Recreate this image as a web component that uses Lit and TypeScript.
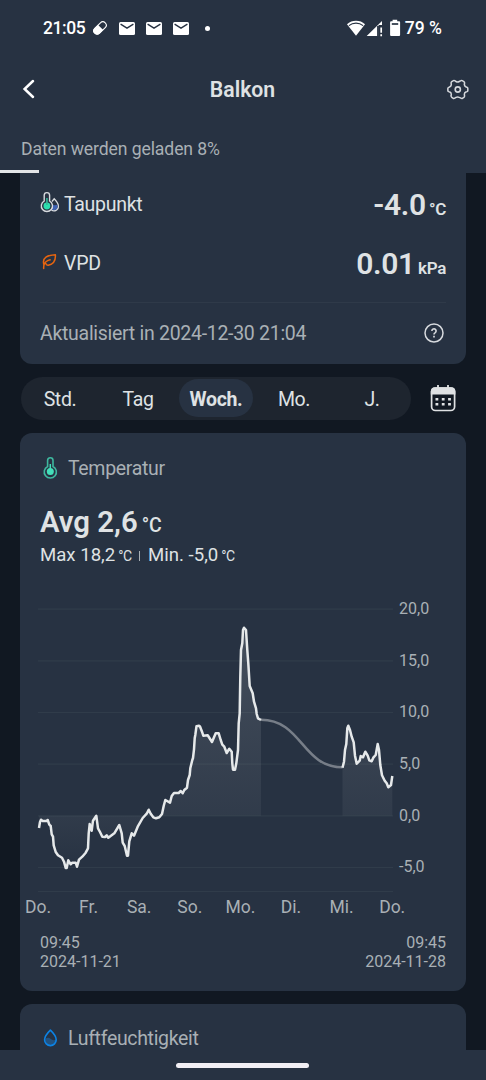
import { LitElement, html, svg, css } from "lit";
import { customElement, state } from "lit/decorators.js";
import { classMap } from "lit/directives/class-map.js";

const MORNING_RUN =
  "39,828 40,822 41,819.7 42.7,821 46.7,821 47.7,820 49.3,824.7 50.7,826 51.7,834.3 53,836.7 53.7,845.3 55.7,852 58,855.3 62,857.7 64,861.7 65.7,868 66.7,868 68.3,860.3 70.7,864.3 72.3,862.7 75.7,862.7 77,866.7 79,859.7 82.3,856.7 85.7,852.7 88,848.3 88.7,833.3 89.7,824 91.7,830.7 93,820.7 96.3,815.7 98,828.3 100,832 102.3,836.7 105,837 106.7,835.3 108.3,837.7 114.3,833.3 119.3,825 121.7,833.3 122.7,842.7 124.7,846 127,855.7 128,855.7 129.3,841.3 131.7,833.3 134,835.7 137.7,826.7 142.7,818 146.7,813.7 148.7,809.7 150.7,813.7 153.3,817.3 156,818.3 159.3,817.3 162,814 163.7,806 165.3,800 170,802.7 171.7,796 174,793 178.7,793 180.7,791 182.7,793.3 184.3,790 187,787.7 188,780 189.7,775 190.3,768.3 192.3,760 193,758 194,749.3 194.7,738.3 195.3,735 196.5,726.2 199,725.7 200,726.5 202,731.7 203.3,735.7 207.7,735.3 212,742 215.7,733.3 218.7,733.3 220.7,740 222.3,744.7 224.3,746.7 226.7,753 229.3,748.7 231.7,751.7 232.3,763.3 233,769.7 235,769.7 236.3,763.3 238,750 238.7,723.3 239.7,713.3 240.3,676.7 241,650 242.3,643.3 243,630 244,627.7 246,630 247.3,650 248.3,663.3 249.7,686 252.7,693.3 254,701.7 256,708.3 256.7,714 258,718.3 261,720";
const LATE_RUN =
  "342.5,767.7 344,761.7 345,750 346.3,744 347.3,728.3 348.3,725.7 350,730 351.7,736.7 353.7,742.3 355,755.7 356.7,763.7 359.7,760.7 360.7,756 363,757.3 365.3,751.7 367.7,755.7 369.3,760.3 371.7,761.3 373.3,757.7 375.7,755 377.7,744 379,750 380.3,765 382,775.3 384.7,780.7 386.7,783.3 388.3,787.3 391,785 392.3,776";
const ZERO_Y = 815.8;

const LEVELS: [string, number][] = [
  ["20,0", 609.2],
  ["15,0", 660.8],
  ["10,0", 712.5],
  ["5,0", 764.2],
  ["0,0", 815.8],
  ["-5,0", 867.5],
];
const DAYS = ["Do.", "Fr.", "Sa.", "So.", "Mo.", "Di.", "Mi.", "Do."];

const mailIcon = html`<svg class="mail" width="16" height="13" viewBox="0 0 16 13">
  <rect width="16" height="13" rx="1.5" fill="#fff" />
  <path d="M1.6 2.2 8 6.2 14.4 2.2" fill="none" stroke="#273242" stroke-width="1.4" />
</svg>`;

@customElement("app-root")
export class AppRoot extends LitElement {
  @state() private range = "Woch.";

  static styles = css`
    :host {
      display: flex;
      flex-direction: column;
      height: 1080px;
      overflow: hidden;
      background: #111822;
      color: #dfe2e4;
      font-family: Roboto, sans-serif;
      font-size: 20px;
    }
    * { box-sizing: border-box; }
    svg { display: block; flex: none; }
    header { flex: none; height: 173px; background: #273242; display: flex; flex-direction: column; }
    .status { height: 56px; padding: 0 44px 0 43px; display: flex; align-items: center; color: #fff; }
    .clock { width: 50px; font: 500 17.5px/56px Roboto, sans-serif; letter-spacing: -0.4px; }
    .mail { margin-right: 11px; }
    .dot { width: 5px; height: 5px; border-radius: 50%; background: #fff; margin-left: 5px; }
    .spacer { flex: 1; }
    .percent { font: 500 17.5px/56px Roboto, sans-serif; white-space: nowrap; }
    .nav { height: 66px; padding: 0 16px 0 20px; display: grid; grid-template-columns: 24px 1fr 24px; align-items: center; }
    .title { text-align: center; font-weight: 600; font-size: 21.2px; padding: 1px 5px 0 0; }
    .loading { height: 48px; padding: 0 21px; font-size: 17.6px; letter-spacing: -0.1px; line-height: 55px; color: #a9b0b5; white-space: nowrap; }
    .progress { width: 39px; height: 3px; background: #e3e5e7; }
    main { flex: 1; min-height: 0; overflow: hidden; padding: 0 20px; display: flex; flex-direction: column; }
    .card { flex: none; background: #273242; border-radius: 12px; }
    .summary { height: 190.5px; border-radius: 0 0 12px 12px; padding: 0 20px; }
    .row { display: flex; align-items: center; height: 56px; }
    .row.first { height: 62px; }
    .row svg { margin-bottom: 4px; }
    .name { flex: 1; padding-left: 4px; font-size: 19.5px; letter-spacing: -0.28px; }
    .value { font-weight: 600; font-size: 30px; letter-spacing: -0.3px; line-height: 36px; padding-top: 6px; }
    .value small { font-size: 17px; font-weight: 600; margin-left: 3px; letter-spacing: -0.3px; }
    .updated { display: flex; align-items: center; justify-content: space-between; height: 62px; margin-top: 11px; border-top: 1px solid #2f3a49; color: #a9b0b5; font-size: 19.5px; letter-spacing: -0.29px; }
    .updated svg { margin: 0 2px 2px 0; }
    .tools { display: flex; align-items: center; margin: 13.5px 0 13px; padding-left: 1px; height: 43px; flex: none; }
    .ranges { width: 390px; height: 43px; border-radius: 21.5px; background: #1e252f; padding: 2px 0; display: flex; }
    .range { flex: 1; text-align: center; line-height: 41px; height: 38px; font-size: 19.5px; letter-spacing: -0.35px; }
    .range span { display: block; width: 74px; margin: 0 auto; border-radius: 19px; }
    .selected span { background: #273242; font-weight: 700; height: 38px; }
    .calendar { margin: 0 0 2px 19px; }
    .chart-card { height: 557.5px; margin-bottom: 13px; }
    .heading { display: flex; align-items: center; height: 70px; padding: 0 20px; gap: 7px; color: #a9b0b5; font-size: 19.5px; letter-spacing: -0.33px; }
    .average { padding: 1px 0 0 20px; font-weight: 600; font-size: 29.3px; line-height: 37px; }
    .average small { font-size: 19.5px; font-weight: 500; margin-left: 4px; }
    .extremes { padding-left: 20px; margin-top: -3px; display: flex; align-items: baseline; font-size: 18.6px; line-height: 28px; }
    .extremes small { font-size: 14px; letter-spacing: -0.5px; margin-left: 3px; }
    .bar { width: 1px; height: 10px; background: #a9b0b5; align-self: center; margin: 0 8px 0 7.5px; }
    .chart { margin-top: 19.7px; overflow: visible; }
    .axis { font: 16px Roboto, sans-serif; fill: #a9b0b5; }
    .day { font: 17.5px Roboto, sans-serif; fill: #a9b0b5; text-anchor: middle; }
    .period { display: flex; justify-content: space-between; padding: 17.6px 20px 0; color: #a9b0b5; font-size: 16px; line-height: 18.7px; }
    .end { text-align: right; }
    .humidity { height: 90px; }
    footer { flex: none; height: 30px; background: #273242; display: flex; justify-content: center; align-items: center; padding-right: 1px; }
    .handle { width: 133px; height: 5px; border-radius: 3px; background: #f1eff4; }
  `;

  private thermometer() {
    return html`<svg width="21" height="24" viewBox="0 0 21 24" fill="none">
      <path d="M7.6 10.5V4.5a2.7 2.7 0 0 1 5.4 0v6a6.1 6.1 0 1 1-5.4 0Z" stroke="#3eb89f" stroke-width="1.6" />
      <circle cx="10.3" cy="15.4" r="3.5" fill="#43dfb9" />
      <path d="M10.3 8v6" stroke="#43dfb9" stroke-width="1.5" />
    </svg>`;
  }

  private chart() {
    return html`<svg class="chart" width="446" height="327" viewBox="20 590 446 327">
      <defs>
        <linearGradient id="fade" gradientUnits="userSpaceOnUse" x1="0" y1="627" x2="0" y2="868">
          <stop offset="0" stop-color="#e8ecee" stop-opacity="0.15" />
          <stop offset="0.78" stop-color="#e8ecee" stop-opacity="0.05" />
          <stop offset="1" stop-color="#e8ecee" stop-opacity="0" />
        </linearGradient>
      </defs>
      ${LEVELS.map(
        ([label, y]) => svg`<path d="M38 ${y}H393" stroke="#303c4a" stroke-width="1.2"/>
          <text class="axis" x="399" y=${y + 4.8}>${label}</text>`
      )}
      <path d="M38 891.5H393" stroke="#303c4a" stroke-width="1.2" />
      <path d="M39,${ZERO_Y}L${MORNING_RUN}L261,${ZERO_Y}Z" fill="url(#fade)" />
      <path d="M342.5,${ZERO_Y}L${LATE_RUN}V${ZERO_Y}Z" fill="url(#fade)" />
      <path d="M261 719.7C302 719.7 302 767.3 342.5 767.3" fill="none" stroke="#777e88" stroke-width="2.5" />
      <g fill="none" stroke="#e6e9ea" stroke-width="2.5" stroke-linejoin="round">
        <polyline points=${MORNING_RUN} />
        <polyline points=${LATE_RUN} />
      </g>
      ${DAYS.map((day, i) => svg`<text class="day" x=${38 + i * 50.6} y="912.5">${day}</text>`)}
    </svg>`;
  }

  render() {
    return html`
      <header>
        <div class="status">
          <span class="clock">21:05</span>
          <svg width="26" height="16" viewBox="0 0 26 16">
            <g transform="rotate(-45 7 8)">
              <rect x="-.4" y="4.6" width="14.8" height="6.8" rx="3.4" fill="none" stroke="#fff" stroke-width="1.1" />
              <path d="M7.8 4.2H3a3.8 3.8 0 0 0 0 7.6h4.8z" fill="#fff" />
            </g>
          </svg>
          ${mailIcon}${mailIcon}${mailIcon}
          <span class="dot"></span>
          <span class="spacer"></span>
          <svg width="58" height="18" viewBox="0 0 58 18">
            <path d="M0 5.2a13.6 13.6 0 0 1 18 0L9 16.8Z" fill="#fff" />
            <path d="M1.9 6.6a11.2 11.2 0 0 1 14.2 0" fill="none" stroke="#273242" stroke-width="1.2" />
            <path d="M19.7 17 35 2v4h-3.4v11Z" fill="#fff" />
            <path d="M31 17V7" stroke="#273242" stroke-width="1.8" />
            <path d="M34.2 8.5v5.3m0 1.5v1.9" stroke="#fff" stroke-width="1.7" />
            <path d="M45.6 2.2V.7h4.6v1.5h1.9q1 0 1 1V16q0 1-1 1h-8q-1 0-1-1V3.2q0-1 1-1Z" fill="#fff" />
            <path d="M44.8 5h6.4" stroke="#273242" stroke-width="1.7" />
          </svg>
          <span class="percent">79 %</span>
        </div>
        <div class="nav">
          <svg width="18" height="22" viewBox="0 0 18 22"><path d="M13 3 4.6 11 13 19" fill="none" stroke="#fff" stroke-width="2.5" stroke-linecap="round" /></svg>
          <span class="title">Balkon</span>
          <svg width="24" height="24" viewBox="0 0 24 24" fill="none" stroke="#d5d8dc" stroke-width="1.6" stroke-linejoin="round">
            <path transform="translate(.6 1) scale(.96)" d="M6.6 2.9Q7.5 2.2 8.5 2.8L9.8 3.7Q11.5 4.6 13.2 3.7L14.9 2.8Q15.8 2.2 16.8 2.9L18 3.7Q18.9 4.3 18.7 5.3L18.5 6.9Q18.6 8.7 20.3 9.3L21.5 9.8Q22.1 10.2 22.1 11V12.9Q22.1 13.8 21.2 14.2L20.1 14.6Q18.6 15.2 18.5 17L18.7 18.6Q18.8 19.5 18 20.1L16.8 20.9Q15.8 21.6 14.9 21L13.2 20.2Q11.5 19.3 9.8 20.2L8.5 21Q7.5 21.6 6.6 20.9L5.4 20.1Q4.5 19.5 4.7 18.5L4.9 17Q4.8 15.2 3.3 14.6L2.2 14.2Q1.3 13.8 1.3 12.9V11Q1.3 10.2 2.2 9.8L3.1 9.3Q4.8 8.7 4.9 6.9L4.7 5.3Q4.5 4.3 5.4 3.7Z" />
            <circle cx="11.8" cy="12.5" r="2.6" />
          </svg>
        </div>
        <div class="loading">Daten werden geladen 8%</div>
        <div class="progress"></div>
      </header>

      <main>
        <section class="card summary">
          <div class="row first">
            <svg width="20" height="24" viewBox="0 0 20 24" fill="none">
              <path d="M12 11.5 14.2 8.8q4.2 4.2 4.2 7.5a4.3 4.3 0 0 1-7 3.5" stroke="#d7dade" stroke-width="1.3" />
              <path d="M12.3 14.2Q14 16 17.4 14.8 18.5 20 13.8 20.3L11 19Z" fill="#4063b3" />
              <path d="M4.2 11V5.3a2.7 2.7 0 0 1 5.4 0V11a5.6 5.6 0 1 1-5.4 0Z" fill="#273242" stroke="#d7dade" stroke-width="1.4" />
              <circle cx="6.9" cy="16" r="3.4" fill="#2cdfae" />
              <path d="M6.9 8v7" stroke="#35b697" stroke-width="1.6" />
            </svg>
            <span class="name">Taupunkt</span>
            <span class="value">-4.0<small>°C</small></span>
          </div>
          <div class="row">
            <svg width="20" height="20" viewBox="0 0 20 20" fill="none" stroke="#e8650f" stroke-width="1.5" stroke-linecap="round" stroke-linejoin="round">
              <path d="M3.7 17.5Q3.2 11.5 8.2 9.4L10.1 8.8M3.8 13.3C2 6.3 7.5 4.2 15.4 3.7C15.8 9.5 13.4 13.2 8.3 14.2Q6.1 14.4 5.8 12.4" />
            </svg>
            <span class="name">VPD</span>
            <span class="value">0.01<small>kPa</small></span>
          </div>
          <div class="updated">
            <span>Aktualisiert in 2024-12-30 21:04</span>
            <svg width="20" height="20" viewBox="0 0 20 20" fill="none" stroke="#d7dade">
              <circle cx="10" cy="10" r="9" stroke-width="1.5" />
              <path d="M7.9 8a2.1 2.1 0 1 1 3.4 1.6Q10 10.3 10 11.4" stroke-width="1.6" />
              <path d="M10 12.8v1.7" stroke-width="1.7" />
            </svg>
          </div>
        </section>

        <div class="tools">
          <div class="ranges">
            ${["Std.", "Tag", "Woch.", "Mo.", "J."].map(
              (name) => html`<div
                class=${classMap({ range: true, selected: name === this.range })}
                @click=${() => (this.range = name)}
              ><span>${name}</span></div>`
            )}
          </div>
          <svg class="calendar" width="26" height="28" viewBox="0 0 26 28">
            <rect x="1.6" y="4" width="23" height="22.5" rx="3.8" fill="none" stroke="#dfe1e3" stroke-width="1.7" />
            <path d="M.8 10.5V7.5q0-4.3 4.3-4.3h16q4.3 0 4.3 4.3v3Z" fill="#dfe1e3" />
            <path d="M8 1v3M18 1v3" stroke="#dfe1e3" stroke-width="1.8" />
            <path d="M5.5 15.3h2.8m3.5 0h2.8m3.5 0h2.8M5.5 20.2h2.8m3.5 0h2.8m3.5 0h2.8" stroke="#dfe1e3" stroke-width="2.6" />
          </svg>
        </div>

        <section class="card chart-card">
          <div class="heading">${this.thermometer()}<span>Temperatur</span></div>
          <div class="average">Avg 2,6<small>°C</small></div>
          <div class="extremes">
            Max 18,2<small>°C</small><span class="bar"></span>Min. -5,0<small>°C</small>
          </div>
          ${this.chart()}
          <div class="period">
            <div>09:45<br />2024-11-21</div>
            <div class="end">09:45<br />2024-11-28</div>
          </div>
        </section>

        <section class="card humidity">
          <div class="heading">
            <svg width="21" height="24" viewBox="0 0 21 24" fill="none">
              <path d="M5.3 12Q8 9.5 10.8 12 13 14 16 12.5 16.5 18 10.5 19 5 18.5 5.3 12Z" fill="#23527f" />
              <path d="M10.4 3.2q5.8 5.6 5.8 9.6a5.8 5.8 0 0 1-11.6 0q0-4 5.8-9.6Z" stroke="#0c83e5" stroke-width="1.6" stroke-linejoin="round" />
            </svg>
            <span>Luftfeuchtigkeit</span>
          </div>
        </section>
      </main>
      <footer><div class="handle"></div></footer>
    `;
  }
}
